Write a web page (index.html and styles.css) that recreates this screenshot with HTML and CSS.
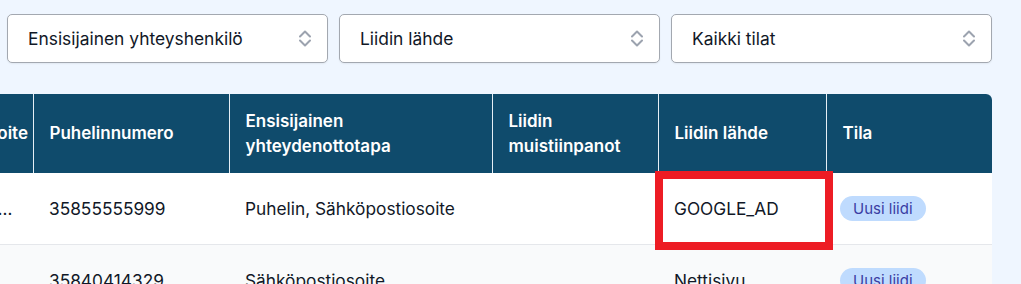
FILE: index.html
```html
<!DOCTYPE html>
<html lang="fi">
<head>
<meta charset="utf-8">
<title>Liidit</title>
<link rel="stylesheet" href="styles.css">
</head>
<body>
<div class="filters">
  <div class="select"><span>Ensisijainen yhteyshenkilö</span>
    <svg class="chev" width="12" height="19" viewBox="0 0 12 19"><path d="M1 7.5 6 2.5 11 7.5M1 11.5 6 16.5 11 11.5" fill="none" stroke="#9ca3af" stroke-width="2" stroke-linecap="round" stroke-linejoin="round"/></svg>
  </div>
  <div class="select"><span>Liidin lähde</span>
    <svg class="chev" width="12" height="19" viewBox="0 0 12 19"><path d="M1 7.5 6 2.5 11 7.5M1 11.5 6 16.5 11 11.5" fill="none" stroke="#9ca3af" stroke-width="2" stroke-linecap="round" stroke-linejoin="round"/></svg>
  </div>
  <div class="select"><span>Kaikki tilat</span>
    <svg class="chev" width="12" height="19" viewBox="0 0 12 19"><path d="M1 7.5 6 2.5 11 7.5M1 11.5 6 16.5 11 11.5" fill="none" stroke="#9ca3af" stroke-width="2" stroke-linecap="round" stroke-linejoin="round"/></svg>
  </div>
</div>
<div class="table-wrap">
  <table class="leads">
    <colgroup>
      <col class="c-email"><col class="c-phone"><col class="c-method"><col class="c-notes"><col class="c-source"><col class="c-status">
    </colgroup>
    <thead>
      <tr>
        <th>Sähköpostiosoite</th>
        <th>Puhelinnumero</th>
        <th>Ensisijainen<br>yhteydenottotapa</th>
        <th>Liidin<br>muistiinpanot</th>
        <th>Liidin lähde</th>
        <th>Tila</th>
      </tr>
    </thead>
    <tbody>
      <tr>
        <td><span class="trunc">matti.virtanen@esimerkki.fi</span></td>
        <td>35855555999</td>
        <td>Puhelin, Sähköpostiosoite</td>
        <td></td>
        <td>GOOGLE_AD</td>
        <td><span class="badge">Uusi liidi</span></td>
      </tr>
      <tr class="alt">
        <td><span class="trunc link">liisa.korhonen@yritys.fi</span></td>
        <td>35840414329</td>
        <td>Sähköpostiosoite</td>
        <td></td>
        <td>Nettisivu</td>
        <td><span class="badge">Uusi liidi</span></td>
      </tr>
    </tbody>
  </table>
  <div class="highlight"></div>
</div>
</body>
</html>
```

FILE: styles.css
```css
* { box-sizing: border-box; }
html, body { margin: 0; padding: 0; }
body {
  background: #eff6ff;
  font-family: Inter, "Noto Sans", "Liberation Sans", sans-serif;
  color: #111827;
  overflow: hidden;
}
.filters {
  display: grid;
  grid-template-columns: repeat(3, 321px);
  column-gap: 11px;
  padding: 14px 0 0 7px;
}
.select {
  height: 49px;
  background: #fff;
  border: 1px solid #a3a8b0;
  border-radius: 5px;
  box-shadow: 0 1px 2px rgba(0,0,0,0.06);
  display: flex;
  align-items: center;
  justify-content: space-between;
  padding: 0 16px 0 20px;
  font-size: 17.4px;
  color: #111827;
}
.chev { display: block; }
.table-wrap {
  position: relative;
  margin-top: 31px;
  width: 992px;
  overflow: hidden;
  border-top-right-radius: 6px;
}
.leads {
  border-collapse: collapse;
  table-layout: fixed;
  margin-left: -130px;
  width: 1122px;
}
.c-email { width: 163px; }
.c-phone { width: 196px; }
.c-method { width: 263px; }
.c-notes { width: 166px; }
.c-source { width: 168px; }
.c-status { width: 166px; }
.leads th {
  background: #0f4b6c;
  color: #fff;
  font-weight: 600;
  font-size: 17px;
  line-height: 25px;
  text-align: left;
  padding: 14.5px 16px;
  border-left: 1px solid #e5eef5;
  white-space: nowrap;
}
.leads th:first-child { border-left: none; }
.leads td {
  font-size: 17.3px;
  line-height: 24px;
  padding: 23px 16px;
  background: #fff;
  border-bottom: 1px solid #e5e7eb;
  white-space: nowrap;
  overflow: hidden;
}
.leads tr.alt td { background: #f9fafb; }
.trunc {
  display: block;
  max-width: 127px;
  overflow: hidden;
  text-overflow: ellipsis;
  white-space: nowrap;
}
.trunc.link { color: #0ea5e9; }
.badge {
  display: inline-block;
  background: #bfdbfe;
  color: #3b3ea3;
  font-size: 15px;
  line-height: 21px;
  padding: 2px 13px;
  border-radius: 999px;
  margin-left: -2px;
}
.highlight {
  position: absolute;
  left: 655px;
  top: 77px;
  width: 178px;
  height: 79px;
  border: 8px solid #ed1c24;
  pointer-events: none;
}
```
